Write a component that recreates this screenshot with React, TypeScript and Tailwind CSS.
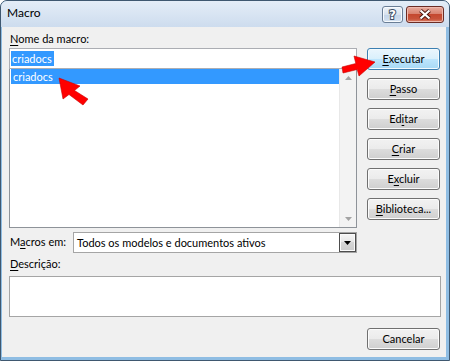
import React from "react";

function U({ children }: { children: React.ReactNode }) {
  return <span className="underline underline-offset-[2px] decoration-[1px]">{children}</span>;
}

function Btn({ children, primary, className = "" }: { children: React.ReactNode; primary?: boolean; className?: string }) {
  return (
    <div
      className={
        "w-[73px] h-[22px] rounded-[3px] border flex items-center justify-center leading-none " +
        (primary
          ? "border-[#3c7fb1] bg-[linear-gradient(#eaf6fd,#d9f0fc_50%,#bee6fd_50%,#a7d9f5)] shadow-[inset_0_0_0_1px_#f4fbfe] "
          : "border-[#707070] bg-[linear-gradient(#f2f2f2,#ebebeb_50%,#dddddd_50%,#cfcfcf)] shadow-[inset_0_0_0_1px_#fcfcfc] ") +
        className
      }
    >
      <span className="pb-[1px]">{children}</span>
    </div>
  );
}

function UpArrow() {
  return (
    <svg width="7" height="4" viewBox="0 0 7 4">
      <polygon points="3.5,0 7,4 0,4" fill="#a3a3a3" />
    </svg>
  );
}
function DownArrow({ color = "#a3a3a3" }: { color?: string }) {
  return (
    <svg width="7" height="4" viewBox="0 0 7 4">
      <polygon points="0,0 7,0 3.5,4" fill={color} />
    </svg>
  );
}

export default function App() {
  return (
    <div className="relative w-[450px] h-[361px] font-[Lato,sans-serif] text-[11px] text-black">
      <div className="w-full h-full flex flex-col border border-[#3f5870] rounded-t-[7px] bg-[#8fbde3] overflow-hidden">
        {/* Title bar */}
        <div className="h-[26px] shrink-0 flex items-start bg-[linear-gradient(#e4edf7,#cddcee)]">
          <span className="ml-[6px] mt-[4px] text-[12px] leading-[16px]">Macro</span>
          <div className="ml-auto mr-[5px] mt-[5px] flex gap-[3px]">
            <div className="w-[21px] h-[17px] rounded-[3px] border border-[#6a7e96] bg-[linear-gradient(#eef3f9,#d7e2ef_50%,#c3d4e8_51%,#d4e1f0)] shadow-[inset_0_0_0_1px_#f7fafd] flex items-center justify-center">
              <svg width="19" height="15" viewBox="0 0 19 15">
                <text
                  x="9.5"
                  y="12"
                  textAnchor="middle"
                  fontFamily="DejaVu Sans, sans-serif"
                  fontWeight="bold"
                  fontSize="12"
                  fill="#ffffff"
                  stroke="#3d4f64"
                  strokeWidth="2"
                  paintOrder="stroke"
                >
                  ?
                </text>
              </svg>
            </div>
            <div className="w-[38px] h-[17px] rounded-[3px] border border-[#6b2c24] bg-[linear-gradient(#e9ab9d,#d98370_45%,#c4482f_50%,#c8533a_80%,#d9826b)] shadow-[inset_0_0_0_1px_#efb9ad] flex items-center justify-center">
              <svg width="36" height="15" viewBox="0 0 36 15">
                <path d="M13.5 3.5 L22.5 11.5 M22.5 3.5 L13.5 11.5" stroke="#4a1710" strokeWidth="4" />
                <path d="M13.5 3.5 L22.5 11.5 M22.5 3.5 L13.5 11.5" stroke="#ffffff" strokeWidth="2.2" />
              </svg>
            </div>
          </div>
        </div>

        {/* Client area */}
        <div className="flex-1 ml-[1px] mr-[3px] mb-[3px] bg-[#f0f0f0] pl-[7px] pr-[5px] pt-[4px] flex flex-col">
          <div className="flex gap-[10px]">
            {/* left column */}
            <div className="w-[348px] flex flex-col">
              <div className="h-[16px] leading-[16px] pl-[1px]">
                <U>N</U>ome da macro:
              </div>
              <div className="mt-[1px] h-[21px] border border-[#abadb3] bg-white flex items-center pl-[1px]">
                <span className="bg-[#3399ff] text-white h-[15px] leading-[15px] pl-[1px] pr-[2px]">criadocs</span>
              </div>
              <div className="h-[159px] border border-t-0 border-[#8e9399] bg-white flex">
                <div className="flex-1 pl-[1px]">
                  <div className="h-[15px] leading-[15px] bg-[#3399ff] text-white pl-[2px]">criadocs</div>
                </div>
                <div className="w-[17px] bg-[#f3f3f3] shadow-[inset_1px_0_0_#e8e8e8] flex flex-col justify-between">
                  <div className="h-[17px] flex items-center justify-center pl-[1px]">
                    <UpArrow />
                  </div>
                  <div className="h-[17px] flex items-center justify-center pl-[1px]">
                    <DownArrow />
                  </div>
                </div>
              </div>
              <div className="mt-[4px] h-[21px] flex items-center">
                <span className="pl-[1px]">
                  M<U>a</U>cros em:
                </span>
                <div className="ml-auto w-[284px] h-[21px] border border-[#a5a5a5] bg-white flex items-stretch">
                  <span className="flex-1 pl-[3px] leading-[19px]">Todos os modelos e documentos ativos</span>
                  <div className="w-[17px] border border-[#4d4d4d] bg-[linear-gradient(#f6f6f6,#e6e6e6_50%,#d6d6d6_50%,#cccccc)] shadow-[inset_0_0_0_1px_#fafafa] flex items-center justify-center">
                    <DownArrow color="#000000" />
                  </div>
                </div>
              </div>
            </div>
            {/* right column */}
            <div className="w-[73px] flex flex-col gap-[8px] pt-[17px]">
              <Btn primary>
                <U>E</U>xecutar
              </Btn>
              <Btn>
                <U>P</U>asso
              </Btn>
              <Btn>
                Ed<U>i</U>tar
              </Btn>
              <Btn>
                <U>C</U>riar
              </Btn>
              <Btn>
                E<U>x</U>cluir
              </Btn>
              <Btn>
                <U>B</U>iblioteca...
              </Btn>
            </div>
          </div>

          <div className="mt-[3px] h-[16px] leading-[16px] pl-[1px]">
            <U>D</U>escrição:
          </div>
          <div className="mt-[4px] h-[41px] border border-[#a5a5a5] bg-white" />
          <div className="mt-[11px] flex justify-end">
            <Btn className="mr-[1px]">Cancelar</Btn>
          </div>
        </div>
      </div>

      {/* red annotation arrows */}
      <svg className="absolute inset-0 pointer-events-none" width="450" height="361" viewBox="0 0 450 361">
        <polygon
          points="59,78 63,99 69,94.5 83,105 88,99 74.5,90.5 80,86"
          fill="#ff0000"
          stroke="#c80000"
          strokeWidth="0.6"
          strokeLinejoin="round"
        />
        <polygon
          points="375,62 354,56 355.8,63.5 342,67 343,73 357.2,69.5 359,76"
          fill="#ff0000"
          stroke="#c80000"
          strokeWidth="0.6"
          strokeLinejoin="round"
        />
      </svg>
    </div>
  );
}
